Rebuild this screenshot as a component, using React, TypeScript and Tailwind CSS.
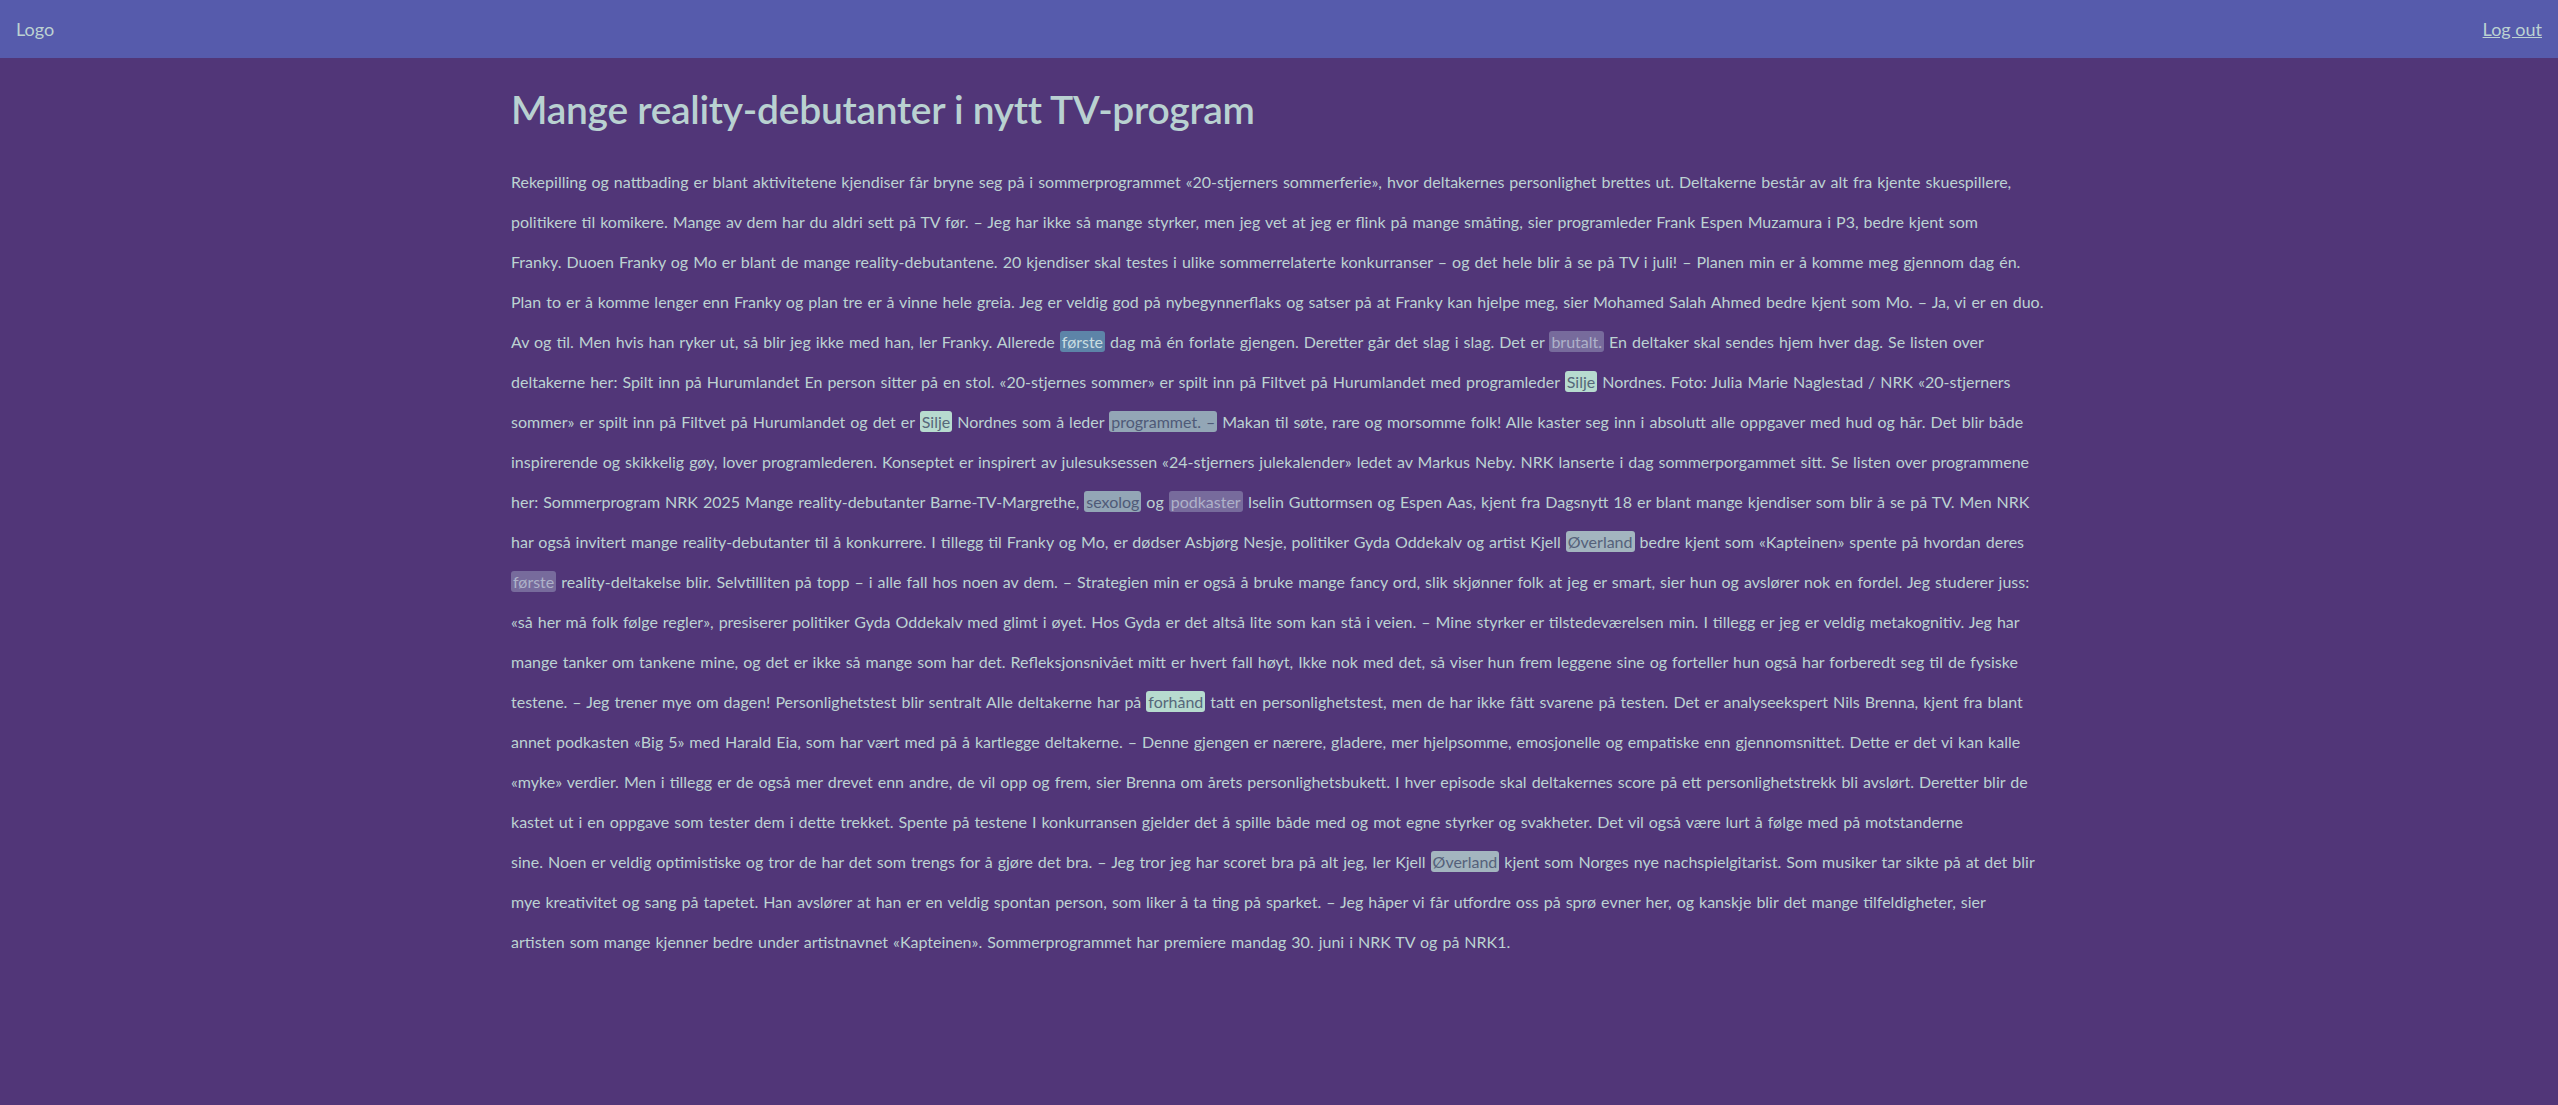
import React from "react";

type Tone = "blue" | "purple" | "mint" | "slate" | "grey";

const toneClass: Record<Tone, string> = {
  blue: "bg-[#5d84a8] text-[#c9dde0]",
  purple: "bg-[#776b9c] text-[#aeb2c9]",
  mint: "bg-[#b7dbcf] text-[#56677a]",
  slate: "bg-[#93a6b6] text-[#4f5a78]",
  grey: "bg-[#a3b5bf] text-[#55617a]",
};

// én linje = liste av tekstbiter, markerte ord som objekt
type Segment = string | { word: string; tone: Tone };

const LINES: Segment[][] = [
  ["Rekepilling og nattbading er blant aktivitetene kjendiser får bryne seg på i sommerprogrammet «20-stjerners sommerferie», hvor deltakernes personlighet brettes ut. Deltakerne består av alt fra kjente skuespillere,"],
  ["politikere til komikere. Mange av dem har du aldri sett på TV før. – Jeg har ikke så mange styrker, men jeg vet at jeg er flink på mange småting, sier programleder Frank Espen Muzamura i P3, bedre kjent som"],
  ["Franky. Duoen Franky og Mo er blant de mange reality-debutantene. 20 kjendiser skal testes i ulike sommerrelaterte konkurranser – og det hele blir å se på TV i juli! – Planen min er å komme meg gjennom dag én."],
  ["Plan to er å komme lenger enn Franky og plan tre er å vinne hele greia. Jeg er veldig god på nybegynnerflaks og satser på at Franky kan hjelpe meg, sier Mohamed Salah Ahmed bedre kjent som Mo. – Ja, vi er en duo."],
  [
    "Av og til. Men hvis han ryker ut, så blir jeg ikke med han, ler Franky. Allerede ",
    { word: "første", tone: "blue" },
    " dag må én forlate gjengen. Deretter går det slag i slag. Det er ",
    { word: "brutalt.", tone: "purple" },
    " En deltaker skal sendes hjem hver dag. Se listen over",
  ],
  [
    "deltakerne her: Spilt inn på Hurumlandet En person sitter på en stol. «20-stjernes sommer» er spilt inn på Filtvet på Hurumlandet med programleder ",
    { word: "Silje", tone: "mint" },
    " Nordnes. Foto: Julia Marie Naglestad / NRK «20-stjerners",
  ],
  [
    "sommer» er spilt inn på Filtvet på Hurumlandet og det er ",
    { word: "Silje", tone: "mint" },
    " Nordnes som å leder ",
    { word: "programmet. –", tone: "slate" },
    " Makan til søte, rare og morsomme folk! Alle kaster seg inn i absolutt alle oppgaver med hud og hår. Det blir både",
  ],
  ["inspirerende og skikkelig gøy, lover programlederen. Konseptet er inspirert av julesuksessen «24-stjerners julekalender» ledet av Markus Neby. NRK lanserte i dag sommerporgammet sitt. Se listen over programmene"],
  [
    "her: Sommerprogram NRK 2025 Mange reality-debutanter Barne-TV-Margrethe, ",
    { word: "sexolog", tone: "slate" },
    " og ",
    { word: "podkaster", tone: "purple" },
    " Iselin Guttormsen og Espen Aas, kjent fra Dagsnytt 18 er blant mange kjendiser som blir å se på TV. Men NRK",
  ],
  [
    "har også invitert mange reality-debutanter til å konkurrere. I tillegg til Franky og Mo, er dødser Asbjørg Nesje, politiker Gyda Oddekalv og artist Kjell ",
    { word: "Øverland", tone: "grey" },
    " bedre kjent som «Kapteinen» spente på hvordan deres",
  ],
  [
    { word: "første", tone: "purple" },
    " reality-deltakelse blir. Selvtilliten på topp – i alle fall hos noen av dem. – Strategien min er også å bruke mange fancy ord, slik skjønner folk at jeg er smart, sier hun og avslører nok en fordel. Jeg studerer juss:",
  ],
  ["«så her må folk følge regler», presiserer politiker Gyda Oddekalv med glimt i øyet. Hos Gyda er det altså lite som kan stå i veien. – Mine styrker er tilstedeværelsen min. I tillegg er jeg er veldig metakognitiv. Jeg har"],
  ["mange tanker om tankene mine, og det er ikke så mange som har det. Refleksjonsnivået mitt er hvert fall høyt, Ikke nok med det, så viser hun frem leggene sine og forteller hun også har forberedt seg til de fysiske"],
  [
    "testene. – Jeg trener mye om dagen! Personlighetstest blir sentralt Alle deltakerne har på ",
    { word: "forhånd", tone: "mint" },
    " tatt en personlighetstest, men de har ikke fått svarene på testen. Det er analyseekspert Nils Brenna, kjent fra blant",
  ],
  ["annet podkasten «Big 5» med Harald Eia, som har vært med på å kartlegge deltakerne. – Denne gjengen er nærere, gladere, mer hjelpsomme, emosjonelle og empatiske enn gjennomsnittet. Dette er det vi kan kalle"],
  ["«myke» verdier. Men i tillegg er de også mer drevet enn andre, de vil opp og frem, sier Brenna om årets personlighetsbukett. I hver episode skal deltakernes score på ett personlighetstrekk bli avslørt. Deretter blir de"],
  ["kastet ut i en oppgave som tester dem i dette trekket. Spente på testene I konkurransen gjelder det å spille både med og mot egne styrker og svakheter. Det vil også være lurt å følge med på motstanderne"],
  [
    "sine. Noen er veldig optimistiske og tror de har det som trengs for å gjøre det bra. – Jeg tror jeg har scoret bra på alt jeg, ler Kjell ",
    { word: "Øverland", tone: "grey" },
    " kjent som Norges nye nachspielgitarist. Som musiker tar sikte på at det blir",
  ],
  ["mye kreativitet og sang på tapetet. Han avslører at han er en veldig spontan person, som liker å ta ting på sparket. – Jeg håper vi får utfordre oss på sprø evner her, og kanskje blir det mange tilfeldigheter, sier"],
  ["artisten som mange kjenner bedre under artistnavnet «Kapteinen». Sommerprogrammet har premiere mandag 30. juni i NRK TV og på NRK1."],
];

function Highlight({ word, tone }: { word: string; tone: Tone }) {
  return <mark className={`rounded-[3px] px-[2px] py-[1px] ${toneClass[tone]}`}>{word}</mark>;
}

export default function App() {
  return (
    <div className="min-h-screen bg-[#513678] font-['Lato',sans-serif] text-[#bcd2d2]">
      <header className="flex h-[58px] items-center justify-between bg-[#565bac] px-4 text-lg">
        <span>Logo</span>
        <a href="#" className="underline">
          Log out
        </a>
      </header>

      <main className="mx-auto max-w-[1536px] pt-[27px]">
        <h1 className="text-[39px] font-semibold leading-[48px] tracking-[-0.3px] text-[#b9d1d1]">
          Mange reality-debutanter i nytt TV-program
        </h1>
        <p className="mt-[29px] text-base leading-10 whitespace-nowrap [word-spacing:0.9px]">
          {LINES.map((line, li) => (
            <React.Fragment key={li}>
              {line.map((seg, si) =>
                typeof seg === "string" ? seg : <Highlight key={si} word={seg.word} tone={seg.tone} />
              )}
              {li < LINES.length - 1 && <br />}
            </React.Fragment>
          ))}
        </p>
      </main>
    </div>
  );
}
